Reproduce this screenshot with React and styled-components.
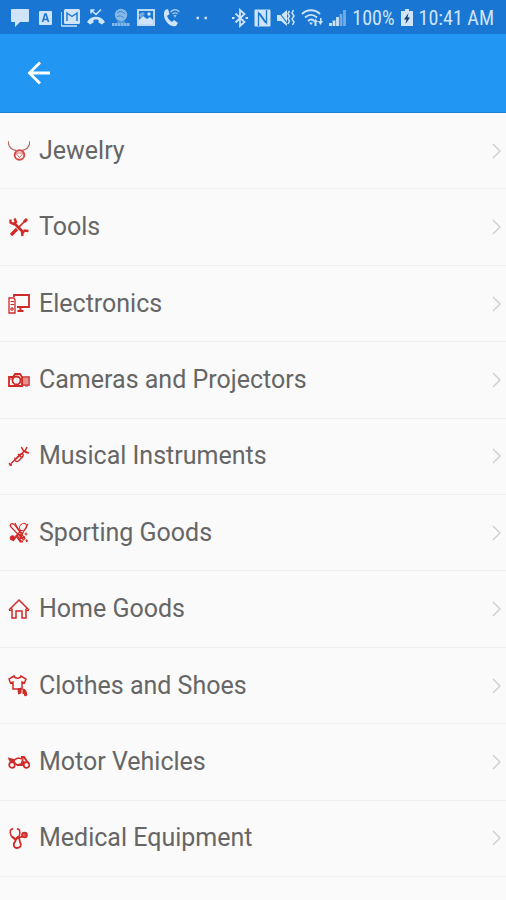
import React from 'react';
import styled, { createGlobalStyle } from 'styled-components';

const statusIcons = [
	{
		name: 'Message',
		art: <path fill="currentColor" stroke="none" d="M1 1h16a1 1 0 0 1 1 1v11a1 1 0 0 1-1 1H9l-5 5v-5H1a1 1 0 0 1-1-1V2a1 1 0 0 1 1-1z" />
	},
	{
		name: 'App',
		art: (
			<>
				<rect x="3" y="3" width="13" height="14" rx="1" fill="currentColor" stroke="none" />
				<path d="M6.500 14l2.500-8h1l2.500 8M7.500 11.500h4" stroke="#1976d2" strokeWidth="1.600" />
			</>
		)
	},
	{
		name: 'Mail',
		art: (
			<>
				<path d="M0 4v12a2 2 0 0 0 2 2h14" strokeWidth="1.600" />
				<rect x="3" y="1" width="16" height="15" rx="1.500" fill="currentColor" stroke="none" />
				<path d="M6 13V5l5 3.500L16 5v8" stroke="#1976d2" strokeWidth="1.400" />
			</>
		)
	},
	{
		name: 'Missed call',
		art: (
			<>
				<path d="M5.500 2.500l4.500 4 5-5M5 5.500V2h3.500" strokeWidth="1.500" />
				<path d="M1 14c4-7 14-7 18 0l-3 2.500-3.500-2v-2.500c-1.500-.6-3.500-.6-5 0v2.500L4 16.500z" fill="currentColor" stroke="none" />
			</>
		)
	},
	{
		name: 'Network',
		dim: true,
		art: (
			<>
				<circle cx="10" cy="7" r="6.200" fill="currentColor" stroke="none" />
				<path d="M6 5c2-2 6-2 8 1M6 9c2-2 5-1 7 1" stroke="#1976d2" strokeWidth=".7" />
				<path d="M1 16.500h18" strokeWidth="3" strokeDasharray="2.500 .4" />
				<path d="M6 14h8" strokeWidth="1" />
			</>
		)
	},
	{
		name: 'Picture',
		art: (
			<>
				<rect x="2" y="2" width="16" height="15" strokeWidth="1.800" />
				<path d="M3 16v-4l4-4 4 3 3-2 3 3v4z" fill="currentColor" stroke="none" />
				<circle cx="13" cy="6" r="1.700" fill="currentColor" stroke="none" />
				<path d="M3 6l4-2 2 2-5 4z" fill="currentColor" stroke="none" opacity=".5" />
			</>
		)
	},
	{
		name: 'Wifi call',
		art: (
			<>
				<path d="M4 2l3-1 1.500 5-2.500 2c1 3 3 5 5 6l2-2 4 3-2 3c-5 2-13-5-12-13z" fill="currentColor" stroke="none" />
				<path d="M9.500 4c3-3 6-3 9 0M11.500 6c2-1.600 3.500-1.600 5 0" opacity=".75" strokeWidth="1.300" />
				<path d="M12.500 7h3L14 10z" fill="currentColor" stroke="none" opacity=".75" />
			</>
		)
	}
];

const systemIcons = [
	{
		name: 'Bluetooth',
		width: 16,
		art: (
			<>
				<path d="M3.500 5.500l9 8.500L8 18V2l4.500 4-9 8.500" strokeWidth="1.800" />
				<path d="M0 10h2.500M13.500 10H16" strokeWidth="2" />
			</>
		)
	},
	{
		name: 'NFC',
		width: 17,
		art: (
			<>
				<rect x=".5" y="1.500" width="16" height="17" rx="1" fill="currentColor" stroke="none" />
				<path d="M4.500 18V5l7 9.500M5.500 5l7 10V2" stroke="#1976d2" strokeWidth="1.300" />
			</>
		)
	},
	{
		name: 'Vibrate',
		width: 18,
		art: (
			<>
				<path d="M0 7h4l6-5v16l-6-5H0z" fill="currentColor" stroke="none" />
				<path d="M1 3l10 13" stroke="#1976d2" strokeWidth="1.200" />
				<path d="M12.500 3L11 5.500 12.500 8 11 10.500l1.500 2.500-1.500 3M16.500 2L15 5l2 3-2 3 2 3-1.500 3" strokeWidth="1.500" />
			</>
		)
	},
	{
		name: 'Wifi',
		width: 22,
		art: (
			<>
				<path d="M1 6c5-5 13-5 18 0M4 9.500c4-3.500 8-3.500 12 0M7 13c2-2 4-2 6-.5" strokeWidth="1.900" />
				<path d="M8 14.500h4L10 17z" fill="currentColor" stroke="none" />
				<path d="M12 14l2.500-3 2.500 3h-1.500v4h-2v-4zM17 13h2v-3h1.500v3H22l-2.500 4z" fill="currentColor" stroke="none" />
			</>
		)
	},
	{
		name: 'Signal',
		width: 17,
		art: (
			<>
				<path d="M1.500 18v-3M5 18v-5.500M8.500 18V9" strokeWidth="2.800" />
				<path d="M12 18V6M15.500 18V2" strokeWidth="2.800" opacity=".5" />
			</>
		)
	}
];

const categories = [
	{
		label: 'Jewelry',
		faded: true,
		art: (
			<>
				<path d="M0 1c.5 6 4 9 8 9.500M22 1c-.5 6-4 9-8 9.500" stroke="#a8504e" strokeWidth="1.300" />
				<circle cx="11.500" cy="15" r="4.800" strokeWidth="1.900" />
				<path d="M7.500 13h8l-4 4.500z" strokeWidth=".8" />
			</>
		)
	},
	{
		label: 'Tools',
		art: (
			<>
				<path d="M6 7l10 10" strokeWidth="2.800" />
				<path d="M2.500 3.500v3L5.500 8l2.500-2-1.500-3.500M14 15.500l.5 4.500M15.500 14.500l5 .5" strokeWidth="2.400" />
				<path d="M3 19L9 13" strokeWidth="3.200" />
				<path d="M10 12L18.500 3.500" strokeWidth="1.700" />
				<path d="M16 6l3-3" strokeWidth="3" />
			</>
		)
	},
	{
		label: 'Electronics',
		art: (
			<>
				<path d="M6 4V2h15v12H9" strokeWidth="1.800" />
				<path d="M1 5h5l1 2v13H1z" strokeWidth="1.300" />
				<path d="M2.500 8.500H6M2.500 11.500H6" strokeWidth="1.200" />
				<circle cx="4" cy="16" r="1.200" strokeWidth="1.200" />
				<path d="M9.500 18h6M12.500 15v2" strokeWidth="2" />
			</>
		)
	},
	{
		label: 'Cameras and Projectors',
		art: (
			<>
				<path d="M1 8h4l2-3h5l2 3v9H1z" strokeWidth="1.800" />
				<circle cx="8.500" cy="11.500" r="4" fill="#fafafa" strokeWidth="1.800" />
				<path d="M14 8h7v8h-7" strokeWidth="1.500" />
				<path d="M14 10h6M14 12h6M14 14h6M17 17h3M2 10h2" strokeWidth="1.100" />
			</>
		)
	},
	{
		label: 'Musical Instruments',
		art: (
			<>
				<path d="M3 18.500L17 5.500" strokeWidth="1.600" />
				<path d="M13.500 2c.5 3 3.500 6 7.500 6l-4-1.500-2-1.500z" fill="currentColor" strokeWidth="1.400" />
				<path d="M17 6l2-4" strokeWidth="1.500" />
				<path d="M7 12.500c-.5 4 1.500 5 4 3l4-4.500c1-2-1-3-3-1.500L8.500 13M10 9l4.500 4" strokeWidth="1.400" />
				<path d="M1 18l3 2-2 .5z" fill="currentColor" strokeWidth="1" />
			</>
		)
	},
	{
		label: 'Sporting Goods',
		art: (
			<>
				<path d="M3 2c2-1 3 0 4 1.500l10 13-1.500 1.500L3 5c-1-1-1-2 0-3z" strokeWidth="1.200" />
				<ellipse cx="15" cy="5" rx="4" ry="3.200" transform="rotate(-45 15 5)" strokeWidth="1" />
				<path d="M13 8L5 19M20 2l-7 12M7 1c2 5 5 9 8 11" strokeWidth="1.300" />
				<circle cx="4.500" cy="16" r="2.300" fill="currentColor" />
				<path d="M8 13l5 7M12 12l1 4 4-1M12 19.500h3M18 18l1.500 1.500" strokeWidth="2.200" />
				<circle cx="18" cy="12" r="1" />
			</>
		)
	},
	{
		label: 'Home Goods',
		art: (
			<>
				<path d="M1 12L11 2l10 10M4 10.500V20h4v-7h6v7h4v-9.500" strokeWidth="1.500" />
				<path d="M1 12.500h3M18 12.500h3" strokeWidth="1" />
			</>
		)
	},
	{
		label: 'Clothes and Shoes',
		art: (
			<>
				<path d="M6 1L1 4l1.500 4L5 7v7h9V7l2.500 1L18 4l-5-3c-1 3-6 3-7 0z" strokeWidth="1.500" />
				<path d="M10 14l3-1v5l-2.500 1zM15 14l2.500 1 1.500 5-2 1-1-3-1 1z" fill="currentColor" strokeWidth="1" />
			</>
		)
	},
	{
		label: 'Motor Vehicles',
		art: (
			<>
				<circle cx="4" cy="14" r="2.800" strokeWidth="1.700" />
				<circle cx="18.500" cy="14" r="2.800" strokeWidth="1.700" />
				<path d="M1 7.500l5 1.500 4-2 5 1-2 5-4 1-3-3-4-1z" strokeWidth="1.400" />
				<path d="M1 8l6 2M13 6h3l4 6M9 14h5l2-4" strokeWidth="2" />
			</>
		)
	},
	{
		label: 'Medical Equipment',
		art: (
			<>
				<path d="M5 1.500L2.500 3c-1 4 1 8 5 9 4-1 5-5 4-9L9 1.500" strokeWidth="1.500" />
				<path d="M4 9.500l3.500 3 3-3" strokeWidth="2.200" />
				<path d="M7.500 12v2c-3 3-2 7 1.500 7s5-3 3-6l-1-4 4-2" strokeWidth="1.800" />
				<circle cx="16.500" cy="8" r="2.300" strokeWidth="2" />
				<path d="M15 8h4M17 5v4" strokeWidth="1.100" />
			</>
		)
	}
];

export default function App() {
	return (
		<Screen>
			<GlobalStyle />
			<StatusBar>
				<Notifications>
					{statusIcons.map((icon) => (
						<StatusIcon key={icon.name} $dim={icon.dim} viewBox="0 0 20 20" width="20" aria-label={icon.name}>
							{icon.art}
						</StatusIcon>
					))}
					<StatusIcon viewBox="0 0 24 20" width="24" aria-label="More">
						<path d="M10.500 10h2.500M18.500 10h2.500" strokeWidth="2.500" />
					</StatusIcon>
				</Notifications>
				<System>
					{systemIcons.map((icon) => (
						<StatusIcon key={icon.name} viewBox={`0 0 ${icon.width} 20`} width={icon.width} aria-label={icon.name}>
							{icon.art}
						</StatusIcon>
					))}
					<StatusText>100%</StatusText>
					<StatusIcon viewBox="0 0 12 20" width="12" aria-label="Charging">
						<path d="M4 1h4v2h4v15H0V3h4z" fill="currentColor" stroke="none" />
						<path d="M7.500 5L3 11.500h2.500L4.500 16 9 9.500H6.500z" fill="#123c6b" stroke="none" />
					</StatusIcon>
					<StatusText>10:41 AM</StatusText>
				</System>
			</StatusBar>
			<AppBar>
				<BackButton type="button" aria-label="Back">
					<svg width="24" height="24" viewBox="0 0 24 24" fill="none" stroke="currentColor" strokeWidth="2.800">
						<path d="M23 12H3M13 1.500L2.500 12 13 22.500" />
					</svg>
				</BackButton>
			</AppBar>
			<List>
				{categories.map((category) => (
					<Item key={category.label}>
						<ItemLink href="#">
							<CategoryIcon viewBox="0 0 22 22" $faded={category.faded} aria-hidden="true">
								{category.art}
							</CategoryIcon>
							<Label>{category.label}</Label>
							<Chevron viewBox="0 0 10 16" aria-hidden="true">
								<path d="M2 1l7 7-7 7" />
							</Chevron>
						</ItemLink>
					</Item>
				))}
			</List>
		</Screen>
	);
}

const GlobalStyle = createGlobalStyle`
	* {
		box-sizing: border-box;
	}
	body {
		margin: 0;
		background: #fafafa;
		font-family: Roboto, 'Liberation Sans', sans-serif;
	}
`;

const Screen = styled.div`
	min-height: 100vh;
	display: flex;
	flex-direction: column;
`;

const StatusBar = styled.div`
	display: flex;
	align-items: center;
	justify-content: space-between;
	height: 34px;
	padding: 2px 12px 0 11px;
	background: #1976d2;
	color: #cfe4f8;
`;

const Notifications = styled.div`
	display: flex;
	align-items: center;
	gap: 5px;
`;

const System = styled.div`
	display: flex;
	align-items: center;
	gap: 6px;
`;

const StatusIcon = styled.svg`
	height: 20px;
	flex: none;
	fill: none;
	stroke: currentColor;
	opacity: ${(props) => (props.$dim ? 0.6 : 1)};
`;

const StatusText = styled.span`
	font-family: 'Roboto Condensed', Roboto, sans-serif;
	font-size: 20px;
	line-height: 24px;
	white-space: nowrap;
`;

const AppBar = styled.header`
	display: flex;
	align-items: center;
	height: 79px;
	padding: 0 15px;
	background: #2196f3;
	border-bottom: 1px solid #1a80d6;
`;

const BackButton = styled.button`
	display: flex;
	padding: 12px;
	border: 0;
	background: none;
	color: #fff;
	cursor: pointer;
`;

const List = styled.ul`
	flex: 1;
	display: flex;
	flex-direction: column;
	margin: 0;
	padding: 0 0 23px;
	list-style: none;
`;

const Item = styled.li`
	flex: 1 0 76px;
	display: flex;
	border-bottom: 1px solid #efefef;
`;

const ItemLink = styled.a`
	flex: 1;
	display: flex;
	align-items: center;
	gap: 9px;
	padding: 0 5px 0 8px;
	color: #666;
	text-decoration: none;
`;

const CategoryIcon = styled.svg`
	width: 22px;
	height: 22px;
	flex: none;
	fill: none;
	color: #cf2a27;
	stroke: currentColor;
	opacity: ${(props) => (props.$faded ? 0.85 : 1)};
`;

const Label = styled.span`
	flex: 1;
	font-size: 25px;
	line-height: 32px;
`;

const Chevron = styled.svg`
	width: 10px;
	height: 16px;
	flex: none;
	fill: none;
	stroke: #d0d0d0;
	stroke-width: 1.5;
`;
